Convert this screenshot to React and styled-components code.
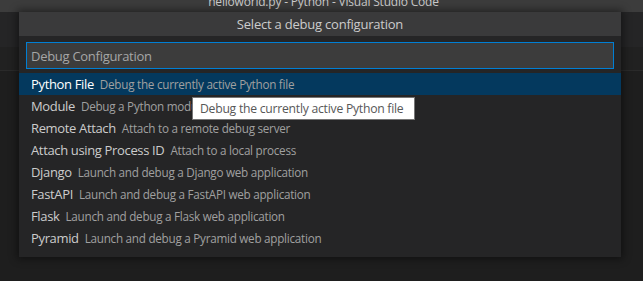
import styled, { createGlobalStyle } from "styled-components";

const GlobalStyle = createGlobalStyle`
  html, body {
    margin: 0;
    padding: 0;
    background: #1e1e1e;
    font-family: "Open Sans", "Noto Sans", sans-serif;
    overflow: hidden;
  }
`;

const items = [
  { label: "Python File", description: "Debug the currently active Python file" },
  { label: "Module", description: "Debug a Python module" },
  { label: "Remote Attach", description: "Attach to a remote debug server" },
  { label: "Attach using Process ID", description: "Attach to a local process" },
  { label: "Django", description: "Launch and debug a Django web application" },
  { label: "FastAPI", description: "Launch and debug a FastAPI web application" },
  { label: "Flask", description: "Launch and debug a Flask web application" },
  { label: "Pyramid", description: "Launch and debug a Pyramid web application" },
];

export default function App() {
  return (
    <Window>
      <GlobalStyle />
      <TitleBar>
        <TitleText>helloworld.py - Python - Visual Studio Code</TitleText>
      </TitleBar>
      <TabBar />
      <Breadcrumbs />
      <Editor />

      <QuickPick>
        <Header>Select a debug configuration</Header>
        <InputWrap>
          <Input placeholder="Debug Configuration" autoFocus />
        </InputWrap>
        <List>
          {items.map((item, i) => (
            <Row key={item.label} selected={i === 0}>
              <Label selected={i === 0}>{item.label}</Label>
              <Description>{item.description}</Description>
            </Row>
          ))}
        </List>
        <Tooltip>Debug the currently active Python file</Tooltip>
      </QuickPick>
    </Window>
  );
}

const Window = styled.div`
  position: relative;
  width: 643px;
  height: 281px;
  display: flex;
  flex-direction: column;
  background: #1e1e1e;
`;

const TitleBar = styled.div`
  height: 12px;
  flex-shrink: 0;
  background: #3c3c3c;
  overflow: hidden;
  display: flex;
  justify-content: center;
`;

const TitleText = styled.span`
  font-size: 12px;
  line-height: 12px;
  color: #cccccc;
  margin-top: -4px;
  padding-left: 4px;
  letter-spacing: -0.2px;
`;

const TabBar = styled.div`
  height: 35px;
  flex-shrink: 0;
  background: #252526;
`;

const Breadcrumbs = styled.div`
  height: 23px;
  flex-shrink: 0;
  background: #212121;
  border-bottom: 1px solid #2a2a2a;
`;

const Editor = styled.div`
  flex: 1;
  background: #1e1e1e;
`;

const QuickPick = styled.div`
  position: absolute;
  top: 12px;
  left: 19px;
  width: 602px;
  background: #252526;
  box-shadow: 0 0 8px 2px rgba(0, 0, 0, 0.45);
  padding-bottom: 8px;
`;

const Header = styled.div`
  height: 24px;
  line-height: 24px;
  text-align: center;
  background: #3a3a3b;
  color: #cccccc;
  font-size: 13px;
  letter-spacing: -0.22px;
`;

const InputWrap = styled.div`
  padding: 6px 7px 4px 7px;
`;

const Input = styled.input`
  box-sizing: border-box;
  display: block;
  width: 100%;
  height: 27px;
  margin: 0;
  padding: 0 4px;
  background: #3c3c3c;
  border: 1px solid #007fd4;
  outline: none;
  color: #cccccc;
  caret-color: #cccccc;
  font-family: "Open Sans", "Noto Sans", sans-serif;
  font-size: 13px;
  letter-spacing: -0.28px;

  &::placeholder {
    color: #a6a6a6;
  }
`;

const List = styled.div`
  display: flex;
  flex-direction: column;
`;

const Row = styled.div`
  height: 22px;
  display: flex;
  align-items: center;
  gap: 6px;
  padding-left: 12px;
  background: ${({ selected }) => (selected ? "#04395e" : "transparent")};
  white-space: nowrap;
  overflow: hidden;
`;

const Label = styled.span`
  font-size: 13px;
  letter-spacing: -0.35px;
  color: ${({ selected }) => (selected ? "#ffffff" : "#cccccc")};
`;

const Description = styled.span`
  font-size: 11.7px;
  letter-spacing: -0.26px;
  color: #a0a0a0;
`;

const Tooltip = styled.div`
  position: absolute;
  top: 85px;
  left: 173px;
  width: 223px;
  height: 23px;
  box-sizing: border-box;
  padding-left: 7px;
  line-height: 21px;
  background: #ffffff;
  border: 1px solid #767676;
  color: #575757;
  font-size: 12.2px;
  letter-spacing: -0.25px;
  white-space: nowrap;
`;
